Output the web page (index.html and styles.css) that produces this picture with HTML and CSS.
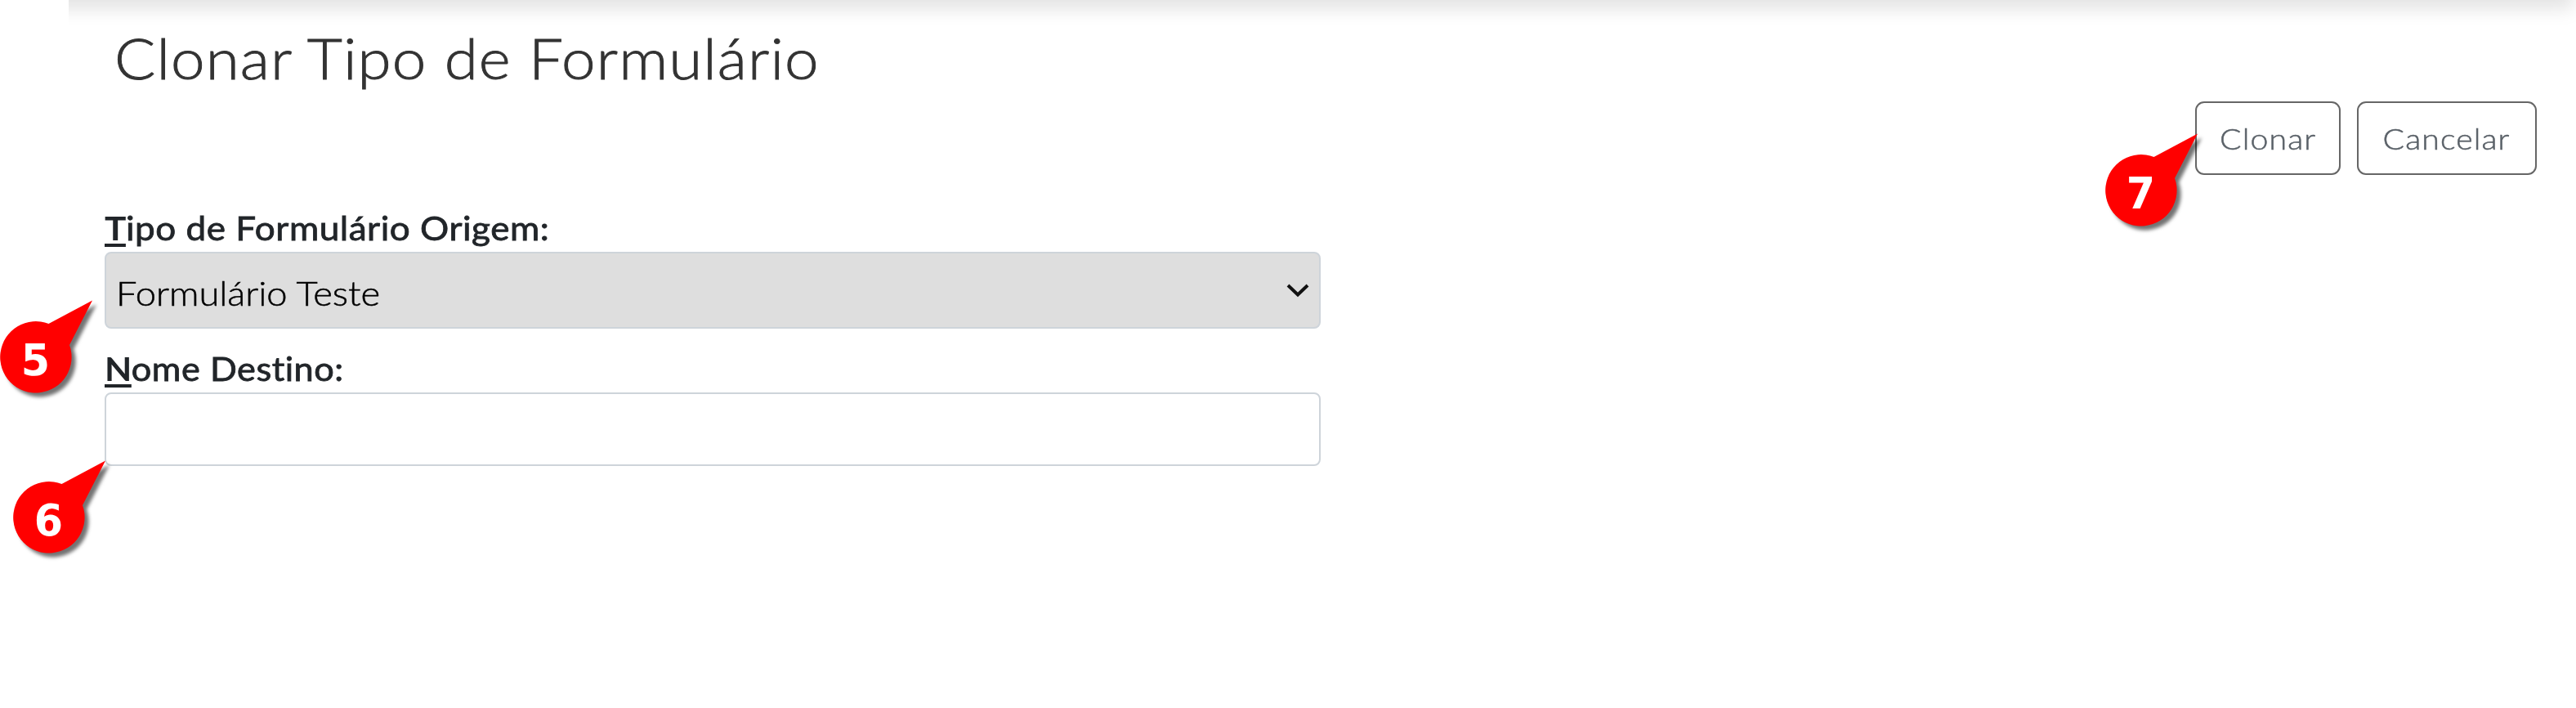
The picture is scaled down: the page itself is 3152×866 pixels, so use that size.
FILE: index.html
```html
<!DOCTYPE html>
<html lang="pt-BR">
<head>
<meta charset="utf-8">
<title>Clonar Tipo de Formulário</title>
<link rel="stylesheet" href="styles.css">
</head>
<body>
<div class="shade"><div class="topbar"></div></div>
<main class="page">
  <h1 class="title"><span>Clonar Tipo de Formulário</span></h1>
  <div class="actions">
    <button class="btn btn-clone" type="button"><span>Clonar</span></button>
    <button class="btn btn-cancel" type="button"><span>Cancelar</span></button>
  </div>
  <form class="form">
    <div class="label label-origin"><span><span class="key">T</span>ipo de Formulário Origem:</span></div>
    <div class="select"><span class="value">Formulário Teste</span>
      <svg class="chevron" width="30" height="20" viewBox="0 0 30 20"><path d="M3 4 L15 15.5 L27 4" fill="none" stroke="#111" stroke-width="4"/></svg>
    </div>
    <div class="label label-name"><span><span class="key">N</span>ome Destino:</span></div>
    <input class="input" type="text" aria-label="Nome Destino">
  </form>
</main>
<svg class="pin pin-5" viewBox="0 0 130 130"><path d="M59.5 33 L113 4.5 L85 59 A43.7 43.7 0 1 1 59.5 33Z"/><text x="43.5" y="96">5</text></svg>
<svg class="pin pin-6" viewBox="0 0 130 130"><path d="M59.5 33 L113 4.5 L85 59 A43.7 43.7 0 1 1 59.5 33Z"/><text x="43.5" y="96">6</text></svg>
<svg class="pin pin-7" viewBox="0 0 130 130"><path d="M59.5 33 L113 4.5 L85 59 A43.7 43.7 0 1 1 59.5 33Z"/><text x="43.5" y="96">7</text></svg>
</body>
</html>
```
FILE: styles.css
```css
* { box-sizing: border-box; }
body {
  margin: 0;
  width: 3152px;
  height: 866px;
  overflow: hidden;
  position: relative;
  background: #fff;
  font-family: Lato, "Open Sans", sans-serif;
  font-variant-ligatures: none;
}
.shade {
  position: absolute;
  left: 84px;
  top: 0;
  right: 0;
  height: 40px;
  overflow: hidden;
}
.topbar {
  height: 60px;
  margin: -60px 3px 0 -60px;
  box-shadow: 0 11px 22px rgba(0, 0, 0, .115);
}
.page { position: relative; padding: 28px 48px 0 128px; }
.title {
  margin: 0;
  padding-left: 12px;
  height: 96px;
  line-height: 86px;
  font-size: 69px;
  font-weight: 300;
  letter-spacing: 1px;
  color: #333;
  white-space: nowrap;
  -webkit-text-stroke: .9px #333;
}
.title > span, .label > span, .value {
  display: inline-block;
  transform-origin: 0 50%;
}
.title > span { transform: scaleX(1.08); }
.label-origin > span { transform: scaleX(1.074); }
.label-name > span { transform: scaleX(1.055); }
.value { transform: scaleX(1.105); -webkit-text-stroke: .5px #000; }
.actions { display: flex; justify-content: flex-end; gap: 20px; }
.btn {
  height: 90px;
  padding: 0;
  border: 2px solid #666;
  border-radius: 11px;
  background: #fff;
  color: #5a6168;
  font: 300 36px/86px Lato, sans-serif;
  letter-spacing: 1px;
  text-align: center;
  -webkit-text-stroke: .5px #5a6168;
}
.btn > span { display: inline-block; transform: scaleX(1.09); }
.btn-clone { width: 178px; }
.btn-cancel { width: 220px; }
.form { display: flex; flex-direction: column; width: 1488px; padding-top: 44px; }
.label {
  height: 50px;
  line-height: 42px;
  font-size: 41px;
  font-weight: 400;
  letter-spacing: .5px;
  color: #212529;
  white-space: nowrap;
  -webkit-text-stroke: .8px #212529;
}
.label-name { margin-top: 28px; }
.key {
  font-weight: 700;
  letter-spacing: -.5px;
  text-decoration: underline;
  text-decoration-thickness: 4px;
  text-underline-offset: 4px;
  text-decoration-skip-ink: none;
  -webkit-text-stroke: 0;
}
.select {
  display: flex;
  justify-content: space-between;
  height: 94px;
  padding: 0 11px 0 12px;
  border: 2px solid #ced4da;
  border-radius: 8px;
  background: #dedede;
  color: #000;
  font-size: 41px;
  font-weight: 300;
  line-height: 98px;
}
.chevron { margin-top: 35px; }
.input {
  height: 90px;
  border: 2px solid #ced4da;
  border-radius: 8px;
  background: #fff;
  font: 400 40px Lato, sans-serif;
}
.pin {
  position: absolute;
  width: 130px;
  height: 130px;
  overflow: visible;
  filter: drop-shadow(5px 5px 2px rgba(0, 0, 0, .55));
}
.pin path { fill: #f00; }
.pin text {
  fill: #fff;
  font: 700 54px "DejaVu Sans", sans-serif;
  text-anchor: middle;
  transform: scaleX(.94);
  transform-origin: 43.5px 0;
}
.pin-5 { left: 0; top: 363px; }
.pin-6 { left: 16px; top: 559px; }
.pin-7 { left: 2576px; top: 159px; }
```
